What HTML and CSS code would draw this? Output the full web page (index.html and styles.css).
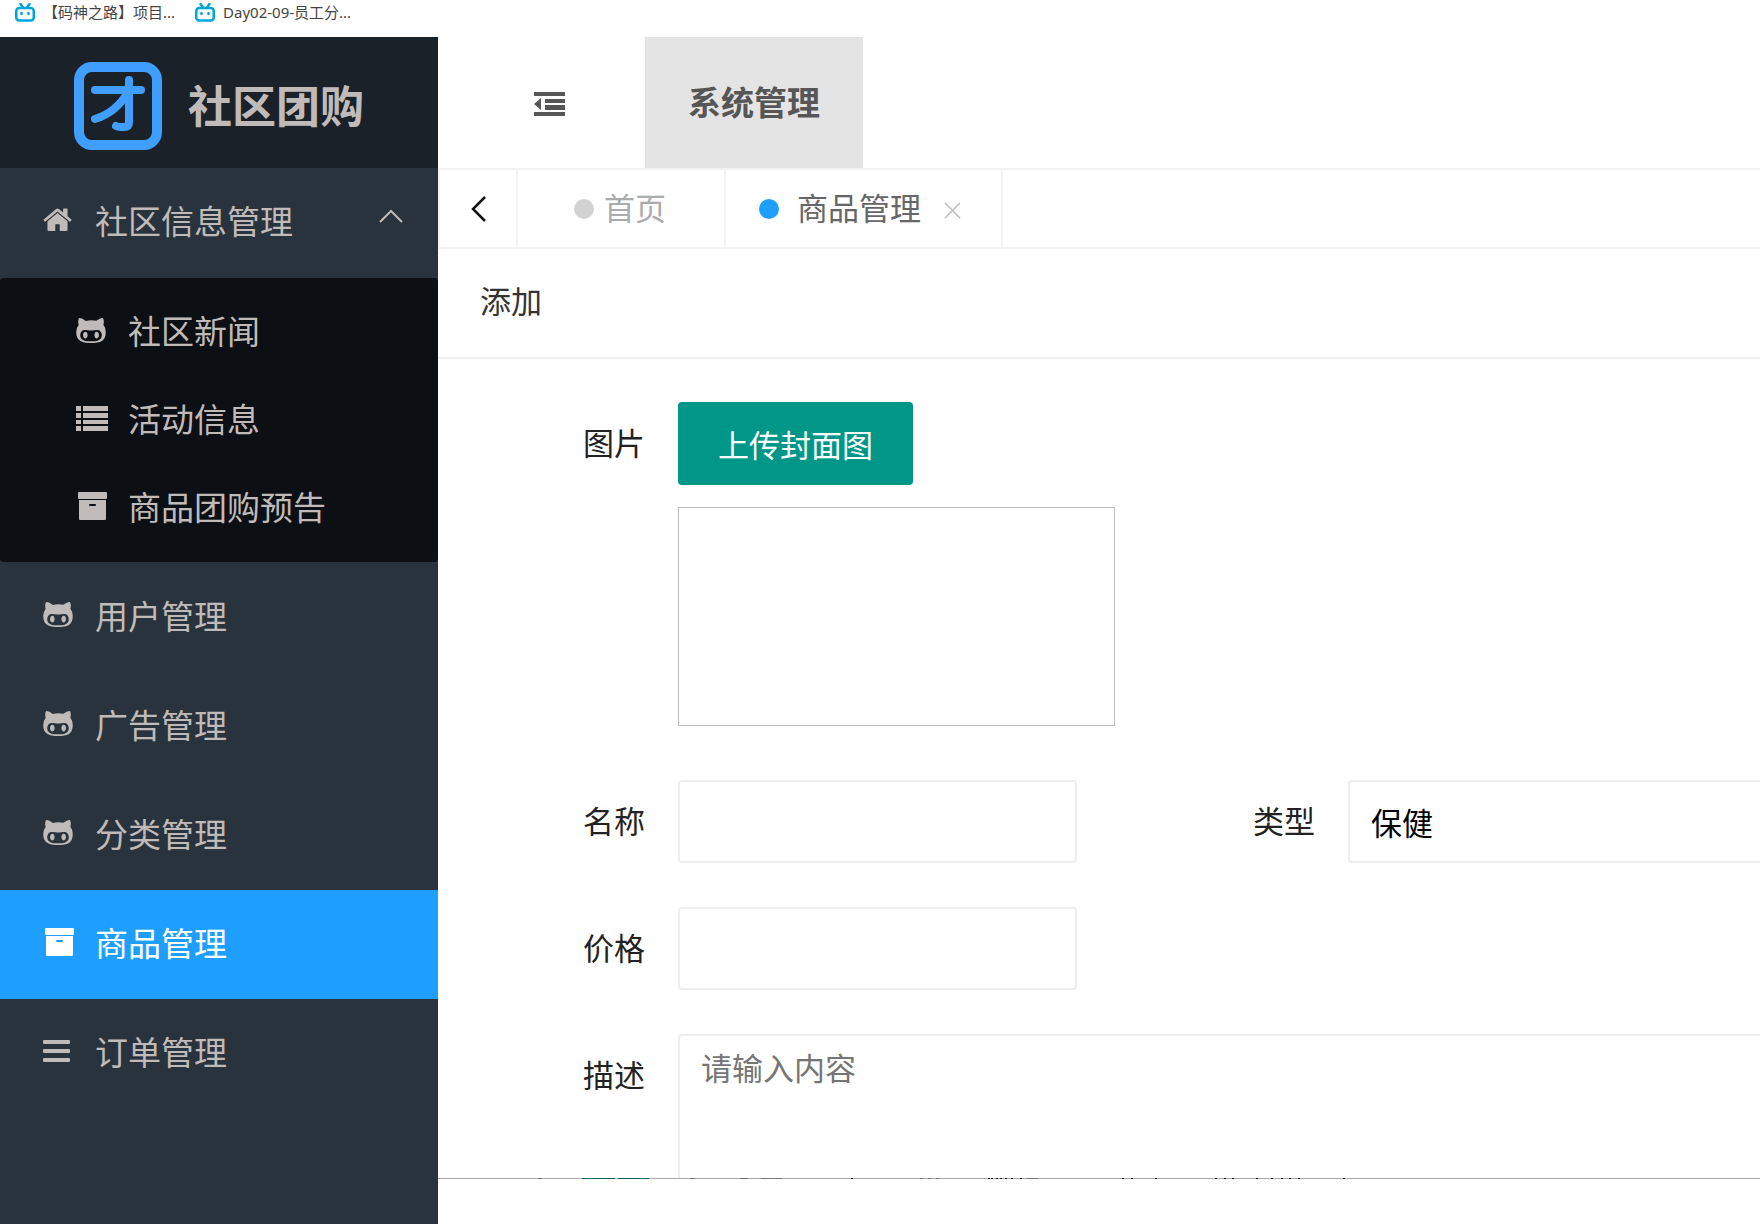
FILE: index.html
```html
<!DOCTYPE html>
<html lang="zh-CN">
<head>
<meta charset="utf-8">
<title>社区团购</title>
<link rel="stylesheet" href="styles.css">
</head>
<body>
<svg class="defs" aria-hidden="true">
  <symbol id="tv" viewBox="0 0 20 19">
    <path d="M5.500 1l2.500 3.500M14.500 1L12 4.500" fill="none" stroke="#00a5dc" stroke-width="2.500" stroke-linecap="round"/>
    <rect x="1.250" y="5" width="17.500" height="12.500" rx="3" fill="none" stroke="#00a5dc" stroke-width="2.500"/>
    <ellipse cx="6.500" cy="10.500" rx="1.300" ry="1.700" fill="#00a5dc"/>
    <ellipse cx="13.500" cy="10.500" rx="1.300" ry="1.700" fill="#00a5dc"/>
  </symbol>
  <symbol id="cat" viewBox="0 128 1664 1408">
    <path d="M640 1088q0 40-12.500 82t-43 76-72.500 34-72.500-34-43-76-12.500-82 12.500-82 43-76 72.500-34 72.500 34 43 76 12.500 82zm640 0q0 40-12.500 82t-43 76-72.500 34-72.500-34-43-76-12.500-82 12.500-82 43-76 72.500-34 72.500 34 43 76 12.500 82zm160 0q0-120-69-204t-187-84q-41 0-195 21-71 11-157 11t-157-11q-152-21-195-21-118 0-187 84t-69 204q0 88 32 153.500t81 103 122 60 140 29.500 149 7h168q82 0 149-7t140-29.500 122-60 81-103 32-153.500zm224-176q0 207-61 331-38 77-105.500 133t-141 86-170 47.500-171.500 22-167 4.500q-78 0-142-3t-147.500-12.500-152.500-30-137-51.500-121-81-86-115q-62-123-62-331 0-237 136-396-27-82-27-170 0-116 51-218 108 0 190 39.500t189 123.500q147-35 309-35 148 0 280 32 105-82 187-121t189-39q51 102 51 218 0 87-27 168 136 160 136 398z"/>
  </symbol>
  <symbol id="home" viewBox="0 230 1664 1306">
    <path d="M1408 992v480q0 26-19 45t-45 19h-384v-384h-256v384h-384q-26 0-45-19t-19-45v-480q0-1 .5-3t.5-3l575-474 575 474q1 2 1 6zm223-69l-62 74q-8 9-21 11h-3q-13 0-21-7l-692-577-692 577q-12 8-24 7-13-2-21-11l-62-74q-8-10-7-23.500t11-21.500l719-599q32-26 76-26t76 26l244 204v-195q0-14 9-23t23-9h192q14 0 23 9t9 23v408l219 182q10 8 11 21.500t-7 23.500z"/>
  </symbol>
  <symbol id="archive" viewBox="0 0 29 28">
    <rect width="29" height="7" rx="1"/>
    <path fill-rule="evenodd" d="M1 8h27v19a1 1 0 0 1-1 1H2a1 1 0 0 1-1-1zM12 12a1 1 0 0 0 0 2h5a1 1 0 0 0 0-2z"/>
  </symbol>
  <symbol id="list" viewBox="0 0 32 25">
    <path d="M0 0h5v5H0zM7 0h25v5H7zM0 7h5v5H0zM7 7h25v5H7zM0 14h5v4H0zM7 14h25v4H7zM0 20h5v5H0zM7 20h25v5H7z"/>
  </symbol>
  <symbol id="bars" viewBox="0 0 27 22">
    <rect width="27" height="4" rx="1"/><rect y="9" width="27" height="4" rx="1"/><rect y="18" width="27" height="4" rx="1"/>
  </symbol>
</svg>

<nav class="bookmarks" aria-label="书签">
  <a href="#"><svg width="20" height="19"><use href="#tv"/></svg>【码神之路】项目...</a>
  <a href="#"><svg width="20" height="19"><use href="#tv"/></svg>Day02-09-员工分...</a>
</nav>

<div class="app">
  <aside class="sidebar">
    <div class="brand">
      <svg width="88" height="88" viewBox="0 0 88 88" fill="none" stroke="#409eff" aria-hidden="true">
        <rect x="5" y="5" width="78" height="78" rx="13" stroke-width="10"/>
        <path d="M21 28h46M55 18v42q0 5-5 5h-4q-2 0-4-1M54 30C46 44 34 53 21 57" stroke-width="8" stroke-linecap="round" stroke-linejoin="round"/>
      </svg>
      <h1>社区团购</h1>
    </div>
    <ul class="menu">
      <li>
        <a href="#"><span class="icon"><svg width="29" height="23"><use href="#home"/></svg></span>社区信息管理
          <svg class="caret" width="24" height="14" viewBox="0 0 24 14" fill="none"><path d="M1 13L12 2l11 11" stroke="currentColor" stroke-width="2"/></svg></a>
        <ul class="submenu">
          <li><a href="#"><span class="icon"><svg width="30" height="25"><use href="#cat"/></svg></span>社区新闻</a></li>
          <li><a href="#"><span class="icon"><svg width="32" height="25"><use href="#list"/></svg></span>活动信息</a></li>
          <li><a href="#"><span class="icon archive"><svg width="29" height="28"><use href="#archive"/></svg></span>商品团购预告</a></li>
        </ul>
      </li>
      <li><a href="#"><span class="icon"><svg width="30" height="25"><use href="#cat"/></svg></span>用户管理</a></li>
      <li><a href="#"><span class="icon"><svg width="30" height="25"><use href="#cat"/></svg></span>广告管理</a></li>
      <li><a href="#"><span class="icon"><svg width="30" height="25"><use href="#cat"/></svg></span>分类管理</a></li>
      <li><a href="#" class="active" aria-current="page"><span class="icon archive"><svg width="29" height="28"><use href="#archive"/></svg></span>商品管理</a></li>
      <li><a href="#"><span class="icon"><svg width="27" height="22"><use href="#bars"/></svg></span>订单管理</a></li>
    </ul>
  </aside>

  <div class="main">
    <header class="topbar">
      <button class="fold" type="button" aria-label="收起菜单">
        <svg width="31" height="24" viewBox="0 0 31 24"><path d="M0 0h31v4H0zM11 7h20v4H11zM11 13h20v5H11zM0 20h31v4H0zM0 12l7-6v12z"/></svg>
      </button>
      <a class="topnav" href="#">系统管理</a>
    </header>

    <div class="tabs">
      <button class="back" type="button" aria-label="向左">
        <svg width="17" height="26" viewBox="0 0 17 26" fill="none"><path d="M15 1L3 13l12 12" stroke="#111" stroke-width="2.500"/></svg>
      </button>
      <a class="tab home" href="#"><span class="dot"></span><span class="text">首页</span></a>
      <div class="tab current">
        <span class="dot"></span><a class="text" href="#">商品管理</a>
        <button class="close" type="button" aria-label="关闭">
          <svg width="17" height="17" viewBox="0 0 17 17" fill="none"><path d="M1 1l15 15M16 1L1 16" stroke="#bbb" stroke-width="1.500"/></svg>
        </button>
      </div>
    </div>

    <h2 class="title">添加</h2>

    <form class="form">
      <div class="row upload">
        <span class="label" id="pic">图片</span>
        <div>
          <button class="btn" type="button" aria-describedby="pic">上传封面图</button>
          <div class="preview"></div>
        </div>
      </div>
      <div class="row">
        <label class="label" for="name">名称</label>
        <input id="name" type="text">
        <label class="label" for="type">类型</label>
        <select id="type"><option>保健</option></select>
      </div>
      <div class="row">
        <label class="label" for="price">价格</label>
        <input id="price" type="text">
      </div>
      <div class="row wide">
        <label class="label" for="desc">描述</label>
        <textarea id="desc" placeholder="请输入内容"></textarea>
      </div>
    </form>
    <div class="edge" aria-hidden="true">
      <svg width="960" height="1" viewBox="0 0 960 1" shape-rendering="crispEdges">
        <path fill="#00665d" d="M144 0h33v1h-33zM180 0h31v1h-31z"/>
        <path fill="#777" d="M100 0h4v1h-4zM252 0h5v1h-5zM302 0h8v1h-8zM323 0h21v1h-21zM482 0h3v1h-3zM490 0h3v1h-3zM498 0h3v1h-3zM589 0h11v1h-11z"/>
        <path fill="#111" d="M413 0h2v1h-2zM550 0h2v1h-2zM553 0h2v1h-2zM558 0h2v1h-2zM562 0h2v1h-2zM567 0h2v1h-2zM573 0h2v1h-2zM582 0h2v1h-2zM684 0h2v1h-2zM693 0h2v1h-2zM717 0h2v1h-2zM777 0h2v1h-2zM786 0h2v1h-2zM794 0h2v1h-2zM818 0h2v1h-2zM833 0h2v1h-2zM843 0h2v1h-2zM851 0h2v1h-2zM860 0h2v1h-2zM905 0h2v1h-2z"/>
      </svg>
    </div>
  </div>
</div>
</body>
</html>
```
FILE: styles.css
```css
* { box-sizing: border-box; }

body {
  margin: 0;
  min-height: 100vh;
  display: flex;
  flex-direction: column;
  background: #fff;
  color: #222;
  font: 31px/40px "Noto Sans CJK SC", sans-serif;
}

a { color: inherit; text-decoration: none; }
ul { list-style: none; margin: 0; padding: 0; }
h1, h2 { margin: 0; }
svg { display: block; flex: none; }
button, input, select, textarea { font: inherit; margin: 0; }
button { border: 0; padding: 0; background: none; color: inherit; cursor: pointer; }

.defs { display: none; }

/* Bookmarks strip */
.bookmarks {
  display: flex;
  gap: 20px;
  padding: 0 15px 12px;
  font: 15px/25px "Noto Sans", "Noto Sans CJK SC", sans-serif;
  color: #444;
}
.bookmarks a { display: flex; align-items: center; gap: 8px; }

.app { display: flex; flex: 1; }

/* Sidebar */
.sidebar {
  flex: none;
  width: 438px;
  background: #28333e;
  color: #c0bbb9;
}
.brand {
  display: flex;
  align-items: center;
  gap: 26px;
  height: 131px;
  padding: 6px 74px 0;
  background: #1a2129;
}
.brand h1 {
  padding-bottom: 4px;
  font-size: 44px;
  line-height: 64px;
  font-weight: 700;
  white-space: nowrap;
}

.menu { font-size: 33px; }
.menu a {
  display: flex;
  align-items: center;
  gap: 20px;
  height: 109px;
  padding: 0 35px 6px 43px;
}
.icon { width: 32px; flex: none; }
.icon.archive { padding-left: 2px; }
.icon svg { fill: currentColor; }
.caret { margin: 0 0 8px auto; }
.submenu {
  margin: 1px 0;
  padding: 10px 0;
  border-radius: 4px;
  background: #0c0f13;
}
.menu .submenu a { height: 88px; padding: 0 35px 4px 76px; }
.menu .active { background: #1e9fff; color: #fff; }

/* Top bar */
.main { flex: 1; min-width: 0; overflow: hidden; }
.topbar { display: flex; height: 131px; color: #565656; }
.fold { width: 207px; display: flex; align-items: center; justify-content: center; padding: 2px 0 0 16px; }
.fold svg { fill: currentColor; }
.topnav {
  display: flex;
  align-items: center;
  padding: 0 43px 4px;
  background: #e4e4e4;
  font-size: 33px;
  font-weight: 700;
}

/* Page tabs */
.tabs {
  display: flex;
  height: 81px;
  border: 2px solid #f3f3f3;
  border-right: 0;
}
.back, .tab { border-right: 2px solid #f3f3f3; }
.back { width: 78px; display: flex; align-items: center; justify-content: center; }
.tab { display: flex; align-items: center; }
.tab .text { padding-bottom: 4px; }
.dot { width: 20px; height: 20px; border-radius: 50%; background: #d2d2d2; }
.home { gap: 10px; padding: 0 58px 0 56px; color: #a9abad; }
.current { gap: 18px; padding: 0 40px 0 33px; color: #666; }
.current .dot { background: #1e9fff; }
.close { margin: 4px 0 0 5px; }

.title {
  padding: 31px 42px 37px;
  border-bottom: 2px solid #f0f0f0;
  font-size: 31px;
  line-height: 40px;
  font-weight: 400;
  color: #333;
}

/* Form */
.form { display: grid; gap: 44px; padding-top: 43px; }
.row { display: grid; grid-template-columns: 240px 399px 271px 1fr; }
.row.upload { grid-template-columns: 240px 1fr; margin-bottom: 10px; }
.row.wide { grid-template-columns: 240px 1fr; }
.label { padding: 20px 33px 0 0; text-align: right; }
.btn {
  display: block;
  height: 83px;
  padding: 0 40px;
  border-radius: 4px;
  background: #009688;
  color: #fff;
}
.preview {
  width: 437px;
  height: 219px;
  margin-top: 22px;
  border: 1px solid #bfbfbf;
}
input, select, textarea {
  width: 100%;
  height: 83px;
  padding: 0 21px;
  border: 2px solid #eee;
  border-radius: 4px;
  background: #fff;
  color: #000;
  outline: 0;
}
select { appearance: none; }
/* These two run on past the right side of the window */
select, textarea {
  border-right: 0;
  border-top-right-radius: 0;
  border-bottom-right-radius: 0;
}
textarea {
  display: block;
  height: 144px;
  padding-top: 11px;
  border-bottom: 0;
  border-radius: 4px 0 0 0;
  resize: none;
}
textarea::placeholder { color: #757575; }

.edge { background: #a9a9a9; }
```
